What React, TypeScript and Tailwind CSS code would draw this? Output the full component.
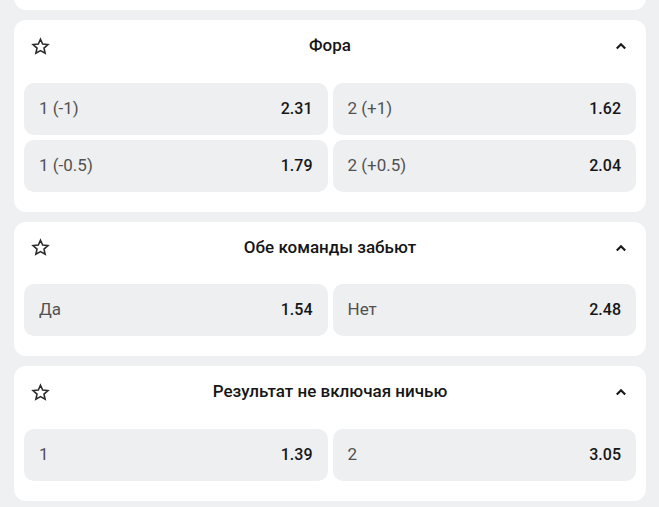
import React from "react";

type Odd = { label: string; value: string };
type Market = { title: string; odds: Odd[] };

const markets: Market[] = [
  {
    title: "Фора",
    odds: [
      { label: "1 (-1)", value: "2.31" },
      { label: "2 (+1)", value: "1.62" },
      { label: "1 (-0.5)", value: "1.79" },
      { label: "2 (+0.5)", value: "2.04" },
    ],
  },
  {
    title: "Обе команды забьют",
    odds: [
      { label: "Да", value: "1.54" },
      { label: "Нет", value: "2.48" },
    ],
  },
  {
    title: "Результат не включая ничью",
    odds: [
      { label: "1", value: "1.39" },
      { label: "2", value: "3.05" },
    ],
  },
];

function StarIcon() {
  return (
    <svg width="19" height="19" viewBox="0 0 24 24" fill="none">
      <path
        d="M12 2.8l2.75 6.1 6.65.65-5 4.45 1.45 6.55L12 17.2l-5.85 3.35 1.45-6.55-5-4.45 6.65-.65z"
        stroke="#2b2b2b"
        strokeWidth="2"
        strokeLinejoin="miter"
      />
    </svg>
  );
}

function ChevronUp() {
  return (
    <svg width="12" height="8" viewBox="0 0 12 8" fill="none">
      <path d="M1.8 6.5L6 2.3l4.2 4.2" stroke="#1a1a1a" strokeWidth="2.2" />
    </svg>
  );
}

function MarketCard({ market }: { market: Market }) {
  return (
    <div className="rounded-[12px] bg-white px-[10px] pb-[20px]">
      <div className="grid h-[52px] grid-cols-[1fr_auto_1fr] items-center">
        <div className="pl-[7px] flex items-center">
          <StarIcon />
        </div>
        <h3 className="text-[17px] font-medium text-[#161616]">{market.title}</h3>
        <div className="flex justify-end pr-[9px]">
          <ChevronUp />
        </div>
      </div>
      <div className="mt-[10.5px] grid grid-cols-2 gap-[5px]">
        {market.odds.map((o) => (
          <button
            key={o.label}
            className="flex h-[52px] items-center justify-between rounded-[10px] bg-[#eeeff1] px-[15px]"
          >
            <span className="text-[17px] text-[#525252]">{o.label}</span>
            <span className="text-[16px] font-medium text-[#161616]">{o.value}</span>
          </button>
        ))}
      </div>
    </div>
  );
}

export default function App() {
  return (
    <div
      className="min-h-[507px] overflow-hidden bg-[#eff0f2] pl-[14px] pr-[13px]"
      style={{ fontFamily: "Roboto, 'Noto Sans', sans-serif" }}
    >
      <div className="-mt-[30px] h-[40px] rounded-[12px] bg-white" />
      <div className="mt-[10px] flex flex-col gap-[10px]">
        {markets.map((m) => (
          <MarketCard key={m.title} market={m} />
        ))}
      </div>
    </div>
  );
}
